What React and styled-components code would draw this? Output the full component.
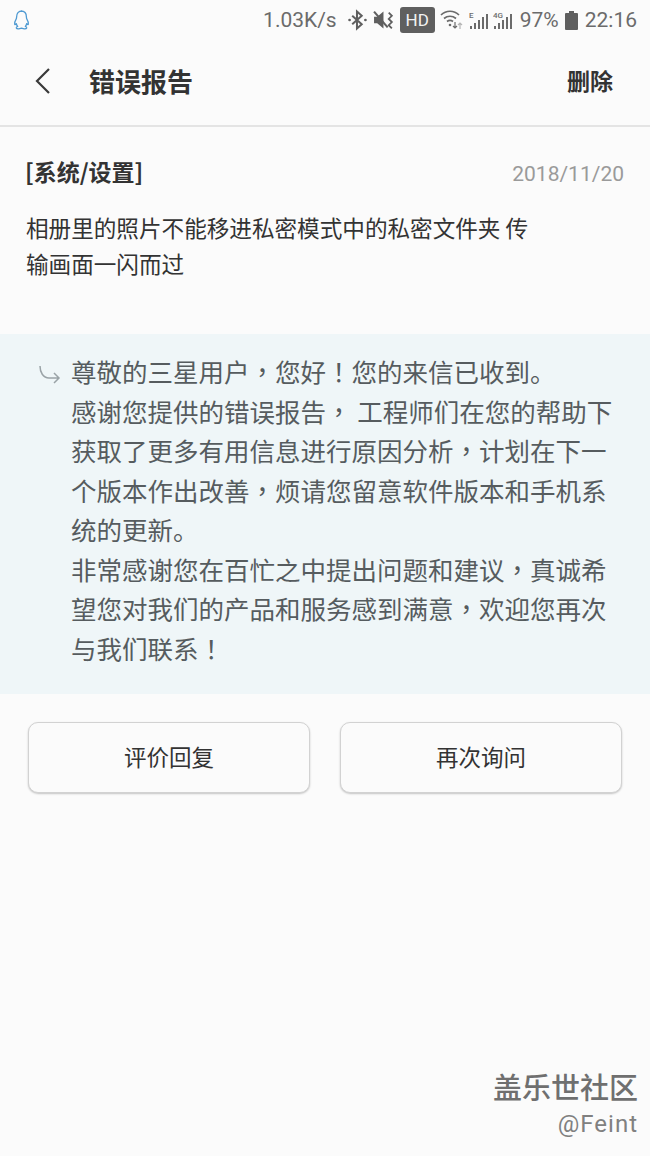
import React from "react";
import styled, { createGlobalStyle } from "styled-components";

const cjk = `"Noto Sans CJK SC", "Noto Sans", sans-serif`;

const Global = createGlobalStyle`
  html, body { margin: 0; padding: 0; background: #fbfbfb; }
  body { font-family: ${cjk}; }
`;

const Page = styled.div`
  position: relative;
  width: 650px;
  height: 1156px;
  overflow: hidden;
  background: #fbfbfb;
  display: flex;
  flex-direction: column;
`;

const StatusBar = styled.div`
  height: 40px;
  padding: 0 13px 0 10px;
  display: flex;
  align-items: center;
  justify-content: space-between;
  box-sizing: border-box;
`;

const StatusRight = styled.div`
  display: flex;
  align-items: center;
  color: #6b6b6b;
  font-family: Roboto, sans-serif;
  font-size: 21px;
`;

const StatusText = styled.span`
  margin-right: ${(p) => p.$mr || 0}px;
  line-height: 40px;
`;

const HdBadge = styled.span`
  width: 35px;
  height: 26px;
  margin: 0 5px;
  border-radius: 3px;
  background: #5f5f5f;
  color: #f2f2f2;
  font-size: 17px;
  display: flex;
  align-items: center;
  justify-content: center;
`;

const Icon = styled.svg`
  display: block;
  flex: none;
  margin-right: ${(p) => p.$mr || 0}px;
`;

const SignalLabel = styled.text`
  font-family: Roboto, sans-serif;
  font-size: 8px;
  font-weight: 500;
  fill: #6b6b6b;
`;

const Header = styled.header`
  height: 87px;
  box-sizing: border-box;
  border-bottom: 2px solid #e4e4e4;
  padding: 0 37px 5px 34px;
  display: flex;
  align-items: center;
`;

const Title = styled.h1`
  margin: 0 0 0 37px;
  flex: 1;
  font-size: 26px;
  font-weight: 700;
  color: #333;
`;

const HeaderAction = styled.span`
  font-size: 23px;
  font-weight: 700;
  color: #333;
`;

const Report = styled.section`
  height: 207px;
  box-sizing: border-box;
  padding: 27px 26px 0;
`;

const ReportHead = styled.div`
  display: flex;
  justify-content: space-between;
  align-items: center;
  height: 34px;
`;

const Category = styled.span`
  font-size: 23px;
  font-weight: 700;
  color: #333;
  margin-left: -1px;
`;

const DateText = styled.span`
  font-family: Roboto, sans-serif;
  font-size: 21px;
  color: #9a9a9a;
  padding-top: 5px;
`;

const ReportBody = styled.p`
  margin: 22px 0 0;
  font-size: 22.6px;
  line-height: 35.5px;
  color: #333;
`;

const Reply = styled.section`
  height: 360px;
  box-sizing: border-box;
  background: #eff6f8;
  padding: 17px 30px 0 38px;
  display: flex;
  align-items: flex-start;
`;

const ReplyArrow = styled.svg`
  flex: none;
  margin: 13px 0 0;
`;

const ReplyText = styled.div`
  margin-left: 9px;
  font-size: 25.5px;
  line-height: 39.5px;
  color: #565c5f;
  white-space: nowrap;
`;

const Punct = styled.span`
  font-family: "Noto Sans CJK TC", sans-serif;
`;

const Actions = styled.div`
  display: grid;
  grid-template-columns: 282px 282px;
  justify-content: space-between;
  padding: 28px 28px 0;
`;

const ActionButton = styled.button`
  height: 71px;
  box-sizing: border-box;
  background: #fbfbfb;
  border: 1px solid #d2d2d2;
  border-radius: 10px;
  box-shadow: 0 1px 2px rgba(0, 0, 0, 0.22);
  font-family: ${cjk};
  font-size: 22.5px;
  color: #333;
  padding: 0 0 3px;
`;

const Watermark = styled.div`
  position: absolute;
  right: 12px;
  top: 1067px;
  display: flex;
  flex-direction: column;
  align-items: flex-end;
`;

const MarkTitle = styled.span`
  font-size: 29px;
  line-height: 38px;
  color: #6f6f6f;
  font-weight: 500;
`;

const MarkUser = styled.span`
  font-family: Roboto, sans-serif;
  font-size: 24px;
  line-height: 38px;
  letter-spacing: 1px;
  color: #808080;
`;

const lines = [
  "尊敬的三星用户，您好！您的来信已收到。",
  "感谢您提供的错误报告， 工程师们在您的帮助下",
  "获取了更多有用信息进行原因分析，计划在下一",
  "个版本作出改善，烦请您留意软件版本和手机系",
  "统的更新。",
  "非常感谢您在百忙之中提出问题和建议，真诚希",
  "望您对我们的产品和服务感到满意，欢迎您再次",
  "与我们联系！",
];

const withPunct = (line) =>
  line.split(/([，！])/).map((part, i) =>
    part === "，" || part === "！" ? <Punct key={i}>{part}</Punct> : part
  );

const Bars = () => (
  <>
    <rect x="1" y="16" width="2" height="3" />
    <rect x="5" y="13" width="2" height="6" />
    <rect x="9" y="10" width="2" height="9" />
    <rect x="13" y="7" width="2" height="12" />
    <rect x="17" y="4" width="2" height="15" />
  </>
);

export default function App() {
  return (
    <Page>
      <Global />
      <StatusBar>
        <Icon width="22" height="24" viewBox="0 0 22 22" fill="none" stroke="#4f9ad2" strokeWidth="1.3" strokeLinejoin="round">
          <path d="M11 2c3.600 0 5.400 2.700 5.400 6 0 1 .1 1.600.7 2.600.8 1.300 1.600 3 1.200 4.600-.3.8-1.100.2-1.600-.6-.2 1.100-.6 2-1.400 2.800 1 .4 1.600 1 1.300 1.700-.4.8-3 .9-4.300.3-.5-.2-1.100-.2-1.600 0-1.300.6-3.900.5-4.300-.3-.3-.7.3-1.300 1.300-1.700-.8-.8-1.200-1.700-1.400-2.800-.5.8-1.300 1.400-1.600.6-.4-1.600.4-3.300 1.200-4.600.6-1 .7-1.600.7-2.600 0-3.300 1.800-6 5.400-6z" />
        </Icon>
        <StatusRight>
          <StatusText $mr={11}>1.03K/s</StatusText>
          <Icon $mr={6} width="19" height="22" viewBox="0 0 18 20" fill="none" stroke="#5f5f5f" strokeWidth="1.9">
            <path d="M4 6l9 8-4.500 4V2L13 6l-9 8" />
            <circle cx="1.500" cy="10" r="1.300" fill="#5f5f5f" stroke="none" />
            <circle cx="16.500" cy="10" r="1.300" fill="#5f5f5f" stroke="none" />
          </Icon>
          <Icon width="22" height="22" viewBox="0 0 21 20" fill="#5f5f5f">
            <path d="M1 7h3l6-5v16l-6-5H1z" />
            <path d="M1 2l13 15" stroke="#5f5f5f" strokeWidth="2" />
            <path d="M15 3l3 3-3 3 3 3-3 3 3 3" fill="none" stroke="#5f5f5f" strokeWidth="1.700" />
          </Icon>
          <HdBadge>HD</HdBadge>
          <Icon $mr={5} width="24" height="22" viewBox="0 0 24 22" fill="none" stroke="#6b6b6b" strokeWidth="1.700">
            <path d="M1 6c5-5 13-5 18 0M4 9.500c3.500-3 8.500-3 12 0M7 12.500c2-1.500 4-1.500 6 0" />
            <circle cx="10" cy="16" r="1.300" fill="#6b6b6b" stroke="none" />
            <path d="M15 13v6M13 17l2 2 2-2" strokeWidth="1.200" />
            <path d="M20 20v-6M18 16l2-2 2 2" stroke="#b5b5b5" strokeWidth="1.200" />
          </Icon>
          <Icon $mr={4} width="20" height="20" viewBox="0 0 20 20" fill="#6b6b6b">
            <Bars />
            <SignalLabel x="0" y="8">E</SignalLabel>
          </Icon>
          <Icon $mr={7} width="20" height="20" viewBox="0 0 20 20" fill="#6b6b6b">
            <Bars />
            <SignalLabel x="0" y="8">4G</SignalLabel>
          </Icon>
          <StatusText $mr={6}>97%</StatusText>
          <Icon $mr={7} width="13" height="20" viewBox="0 0 13 20" fill="#5f5f5f">
            <path d="M4 1h5v2h3a1 1 0 0 1 1 1v15a1 1 0 0 1-1 1H1a1 1 0 0 1-1-1V4a1 1 0 0 1 1-1h3z" />
          </Icon>
          <StatusText>22:16</StatusText>
        </StatusRight>
      </StatusBar>

      <Header>
        <Icon width="18" height="30" viewBox="0 0 18 30" fill="none" stroke="#3a3a3a" strokeWidth="2.200">
          <path d="M15 4L3 16l12 12" />
        </Icon>
        <Title>错误报告</Title>
        <HeaderAction>删除</HeaderAction>
      </Header>

      <Report>
        <ReportHead>
          <Category>[系统/设置]</Category>
          <DateText>2018/11/20</DateText>
        </ReportHead>
        <ReportBody>
          相册里的照片不能移进私密模式中的私密文件夹 传
          <br />
          输画面一闪而过
        </ReportBody>
      </Report>

      <Reply>
        <ReplyArrow width="24" height="22" viewBox="0 0 24 22" fill="none" stroke="#9aa3a7" strokeWidth="1.500">
          <path d="M2 2c0 6 3 12 9 12h10M16 9l5 5-5 5" />
        </ReplyArrow>
        <ReplyText>
          {lines.map((l) => (
            <div key={l}>{withPunct(l)}</div>
          ))}
        </ReplyText>
      </Reply>

      <Actions>
        <ActionButton>评价回复</ActionButton>
        <ActionButton>再次询问</ActionButton>
      </Actions>

      <Watermark>
        <MarkTitle>盖乐世社区</MarkTitle>
        <MarkUser>@Feint</MarkUser>
      </Watermark>
    </Page>
  );
}
